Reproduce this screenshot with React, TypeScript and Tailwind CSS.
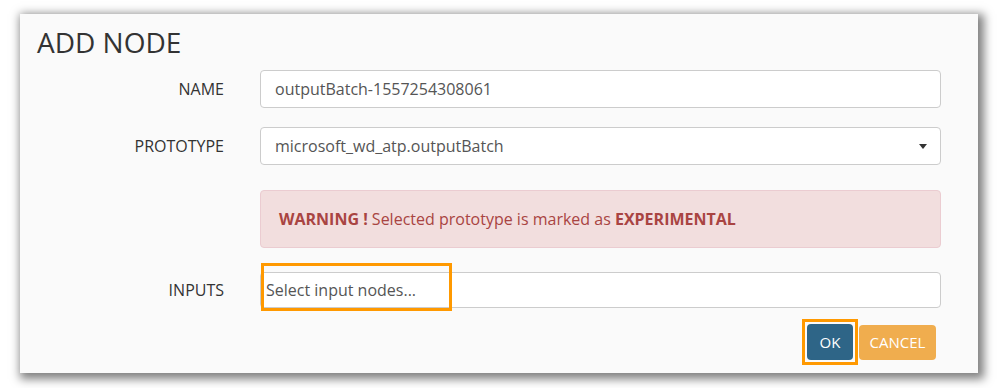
import React from 'react';

const font = { fontFamily: '"Open Sans", "Noto Sans", sans-serif' };

function Row({ label, children }: { label?: string; children: React.ReactNode }) {
  return (
    <div className="flex items-center">
      <div className="w-[204px] text-right text-[16px] text-[#333]">{label}</div>
      <div className="ml-[36px] w-[681px]">{children}</div>
    </div>
  );
}

export default function App() {
  return (
    <div className="w-[998px] h-[388px] bg-white pt-[14px] pl-[20px]" style={font}>
      <div className="relative w-[958px] h-[359px] bg-[#fafafa] shadow-[3px_3px_9px_3px_rgba(0,0,0,0.5)] pt-[11px]">
        <h1 className="pl-[17px] text-[28px] leading-[34px] text-[#333]">ADD NODE</h1>

        <div className="mt-[11px]">
          <Row label="NAME">
            <div className="h-[38px] flex items-center px-[14px] bg-white border border-[#ccc] rounded-[4px] text-[16px] text-[#555]">
              outputBatch-1557254308061
            </div>
          </Row>
        </div>

        <div className="mt-[19px]">
          <Row label="PROTOTYPE">
            <div className="h-[38px] flex items-center justify-between pl-[14px] pr-[13px] bg-white border border-[#ccc] rounded-[4px] text-[16px] text-[#555]">
              <span>microsoft_wd_atp.outputBatch</span>
              <span className="w-0 h-0 border-l-[4px] border-r-[4px] border-t-[5px] border-l-transparent border-r-transparent border-t-[#333]" />
            </div>
          </Row>
        </div>

        <div className="mt-[25px]">
          <Row>
            <div className="h-[58px] flex items-center px-[18px] bg-[#f2dede] border border-[#ebccd1] rounded-[4px] text-[16px] text-[#a94442]">
              <span>
                <b className="font-bold">WARNING !</b> Selected prototype is marked as <b className="font-bold">EXPERIMENTAL</b>
              </span>
            </div>
          </Row>
        </div>

        <div className="mt-[24px]">
          <Row label="INPUTS">
            <div className="h-[36px] flex items-center px-[5px] bg-white border border-[#ccc] rounded-[4px] text-[16px] text-[#555]">
              Select input nodes...
            </div>
          </Row>
        </div>

        <div className="mt-[11px] flex justify-end pr-[42px] items-center">
          <div className="p-[2px] border-[3px] border-[#ff9900]">
            <button className="h-[36px] w-[46px] rounded-[4px] bg-[#2e6587] text-white text-[15px]">
              OK
            </button>
          </div>
          <button className="ml-[1px] h-[35px] w-[77px] rounded-[4px] bg-[#f0ad4e] text-white text-[15px]">
            CANCEL
          </button>
        </div>

        {/* annotation highlight over inputs field */}
        <div className="absolute left-[241px] top-[249px] w-[191px] h-[48px] border-[3px] border-[#ff9900] pointer-events-none" />
      </div>
    </div>
  );
}
